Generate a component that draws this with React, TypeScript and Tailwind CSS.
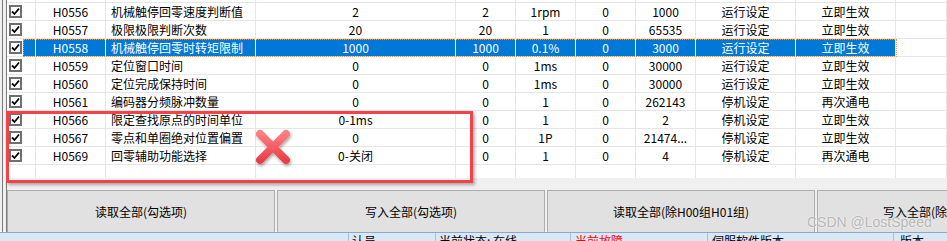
import React from "react";

type Row = {
  code: string;
  name: string;
  value: string;
  def: string;
  unit: string;
  min: string;
  max: string;
  kind: string;
  effect: string;
};

const rows: Row[] = [
  { code: "H0556", name: "机械触停回零速度判断值", value: "2", def: "2", unit: "1rpm", min: "0", max: "1000", kind: "运行设定", effect: "立即生效" },
  { code: "H0557", name: "极限极限判断次数", value: "20", def: "20", unit: "1", min: "0", max: "65535", kind: "运行设定", effect: "立即生效" },
  { code: "H0558", name: "机械触停回零时转矩限制", value: "1000", def: "1000", unit: "0.1%", min: "0", max: "3000", kind: "运行设定", effect: "立即生效" },
  { code: "H0559", name: "定位窗口时间", value: "0", def: "0", unit: "1ms", min: "0", max: "30000", kind: "运行设定", effect: "立即生效" },
  { code: "H0560", name: "定位完成保持时间", value: "0", def: "0", unit: "1ms", min: "0", max: "30000", kind: "运行设定", effect: "立即生效" },
  { code: "H0561", name: "编码器分频脉冲数量", value: "0", def: "0", unit: "1", min: "0", max: "262143", kind: "停机设定", effect: "再次通电" },
  { code: "H0566", name: "限定查找原点的时间单位", value: "0-1ms", def: "0", unit: "1", min: "0", max: "2", kind: "停机设定", effect: "立即生效" },
  { code: "H0567", name: "零点和单圈绝对位置偏置", value: "0", def: "0", unit: "1P", min: "0", max: "21474...", kind: "停机设定", effect: "立即生效" },
  { code: "H0569", name: "回零辅助功能选择", value: "0-关闭", def: "0", unit: "1", min: "0", max: "4", kind: "停机设定", effect: "再次通电" },
];

const SELECTED = "H0558";

const cell = "h-full flex items-center border-r";

const CheckBox: React.FC = () => (
  <div className="ml-[2px] w-[13px] h-[13px] border-2 border-[#707070] bg-white flex items-center justify-center">
    <svg width="9" height="9" viewBox="0 0 9 9">
      <path d="M1 4.5 L3.5 7 L8 1.5" fill="none" stroke="#000" strokeWidth="1.8" />
    </svg>
  </div>
);

const GridRow: React.FC<{ row: Row }> = ({ row }) => {
  const sel = row.code === SELECTED;
  const line = sel ? "border-white" : "border-[#e6e6e6]";
  const bg = sel ? "bg-[#0078d7] text-white" : "";
  return (
    <div className="relative flex h-[18px] border-b border-[#e6e6e6] bg-white">
      <div className="w-[16px] h-full flex items-center">
        <CheckBox />
      </div>
      <div className={`flex h-full ${bg}`}>
        <div className={`w-[13px] ${cell} ${line}`}></div>
        <div className={`w-[70px] justify-center ${cell} ${line}`}>{row.code}</div>
        <div className={`w-[150px] pl-[5px] whitespace-nowrap ${cell} ${line}`}>{row.name}</div>
        <div className={`w-[200px] justify-center ${cell} ${line}`}>{row.value}</div>
        <div className={`w-[60px] justify-center ${cell} ${line}`}>{row.def}</div>
        <div className={`w-[60px] justify-center ${cell} ${line}`}>{row.unit}</div>
        <div className={`w-[60px] justify-center ${cell} ${line}`}>{row.min}</div>
        <div className={`w-[60px] justify-center ${cell} ${line}`}>{row.max}</div>
        <div className={`w-[100px] justify-center ${cell} ${line}`}>{row.kind}</div>
        <div className={`w-[100px] justify-center ${cell} border-[#e6e6e6]`}>{row.effect}</div>
      </div>
      <div className="w-[51px] h-full border-r border-[#e6e6e6]"></div>
      {sel && (
        <div className="absolute left-[16px] top-0 w-[874px] h-[18px] border border-dotted border-[#e39a4c]"></div>
      )}
    </div>
  );
};

const EmptyRow: React.FC<{ h: string }> = ({ h }) => (
  <div className={`flex ${h} bg-white`}>
    <div className="w-[16px] h-full"></div>
    <div className="w-[13px] h-full border-r border-[#e6e6e6]"></div>
    <div className="w-[70px] h-full border-r border-[#e6e6e6]"></div>
    <div className="w-[150px] h-full border-r border-[#e6e6e6]"></div>
    <div className="w-[200px] h-full border-r border-[#e6e6e6]"></div>
    <div className="w-[60px] h-full border-r border-[#e6e6e6]"></div>
    <div className="w-[60px] h-full border-r border-[#e6e6e6]"></div>
    <div className="w-[60px] h-full border-r border-[#e6e6e6]"></div>
    <div className="w-[60px] h-full border-r border-[#e6e6e6]"></div>
    <div className="w-[100px] h-full border-r border-[#e6e6e6]"></div>
    <div className="w-[100px] h-full border-r border-[#e6e6e6]"></div>
    <div className="w-[51px] h-full border-r border-[#e6e6e6]"></div>
  </div>
);

const buttons = ["读取全部(勾选项)", "写入全部(勾选项)", "读取全部(除H00组H01组)", "写入全部(除H00组H01组)"];

export default function App() {
  return (
    <div className="relative w-[947px] h-[241px] overflow-hidden bg-[#f0f0f0] text-[12px] text-black font-['Noto_Sans_CJK_SC','Noto_Sans',sans-serif]">
      <div className="flex h-[232px]">
        <div className="ml-[2px] w-[5px] h-full border-l border-r border-[#7a7a7a]"></div>
        <div className="flex-1 flex flex-col min-w-0">
          <div className="h-[178px] overflow-hidden bg-white">
            <div className="h-[3px] border-b border-[#e6e6e6]">
              <EmptyRow h="h-[2px]" />
            </div>
            {rows.map((r) => (
              <GridRow key={r.code} row={r} />
            ))}
            <EmptyRow h="h-[13px]" />
          </div>
          <div className="mt-[12px] flex gap-[2px] flex-1 overflow-hidden">
            {buttons.map((b) => (
              <div
                key={b}
                className="w-[268px] shrink-0 h-full bg-[#e1e1e1] border border-b-0 border-[#adadad] flex items-center justify-center whitespace-nowrap"
              >
                {b}
              </div>
            ))}
          </div>
        </div>
      </div>

      <div className="h-[9px] border-t border-[#86a9d4] bg-[#dce7f5] shadow-[0_-1px_0_#ffffff] flex text-[12px] leading-[12px] whitespace-nowrap overflow-hidden">
        <div className="w-[348px]"></div>
        <div className="w-[87px] pl-[3px] pt-[2px] border-l border-[#a9bfdb]">认员</div>
        <div className="w-[135px] pl-[3px] pt-[2px] border-l border-[#a9bfdb]">当前状态: 在线</div>
        <div className="w-[137px] pl-[4px] pt-[2px] border-l border-[#a9bfdb] text-[#ff0000]">当前故障</div>
        <div className="w-[186px] pl-[4px] pt-[2px] border-l border-[#a9bfdb]">伺服软件版本</div>
        <div className="flex-1 pl-[6px] pt-[2px] border-l border-[#a9bfdb]">版本</div>
      </div>

      {/* annotation overlays */}
      <div className="absolute left-[6px] top-[111px] w-[467px] h-[72px] border-[3px] border-[#f2434b] shadow-[2px_2px_3px_rgba(0,0,0,0.3)]"></div>
      <svg className="absolute left-[254px] top-[128px]" width="40" height="40" viewBox="0 0 40 40">
        <defs>
          <linearGradient id="xg" x1="0" y1="0" x2="0" y2="1">
            <stop offset="0" stopColor="#ff7c80" />
            <stop offset="1" stopColor="#e8404a" />
          </linearGradient>
          <filter id="xs" x="-20%" y="-20%" width="150%" height="150%">
            <feDropShadow dx="1" dy="2" stdDeviation="1.5" floodColor="#000" floodOpacity="0.35" />
          </filter>
        </defs>
        <g filter="url(#xs)" stroke="url(#xg)" strokeWidth="8" strokeLinecap="round">
          <line x1="6" y1="6" x2="32" y2="32" />
          <line x1="32" y1="6" x2="6" y2="32" />
        </g>
      </svg>
      <div className="absolute left-[807px] top-[214px] text-[14px] leading-[16px] text-[#9c9c9c]/70 font-['Liberation_Sans',sans-serif] [text-shadow:0_0_2px_#ffffff] whitespace-nowrap">
        CSDN @LostSpeed
      </div>
    </div>
  );
}
